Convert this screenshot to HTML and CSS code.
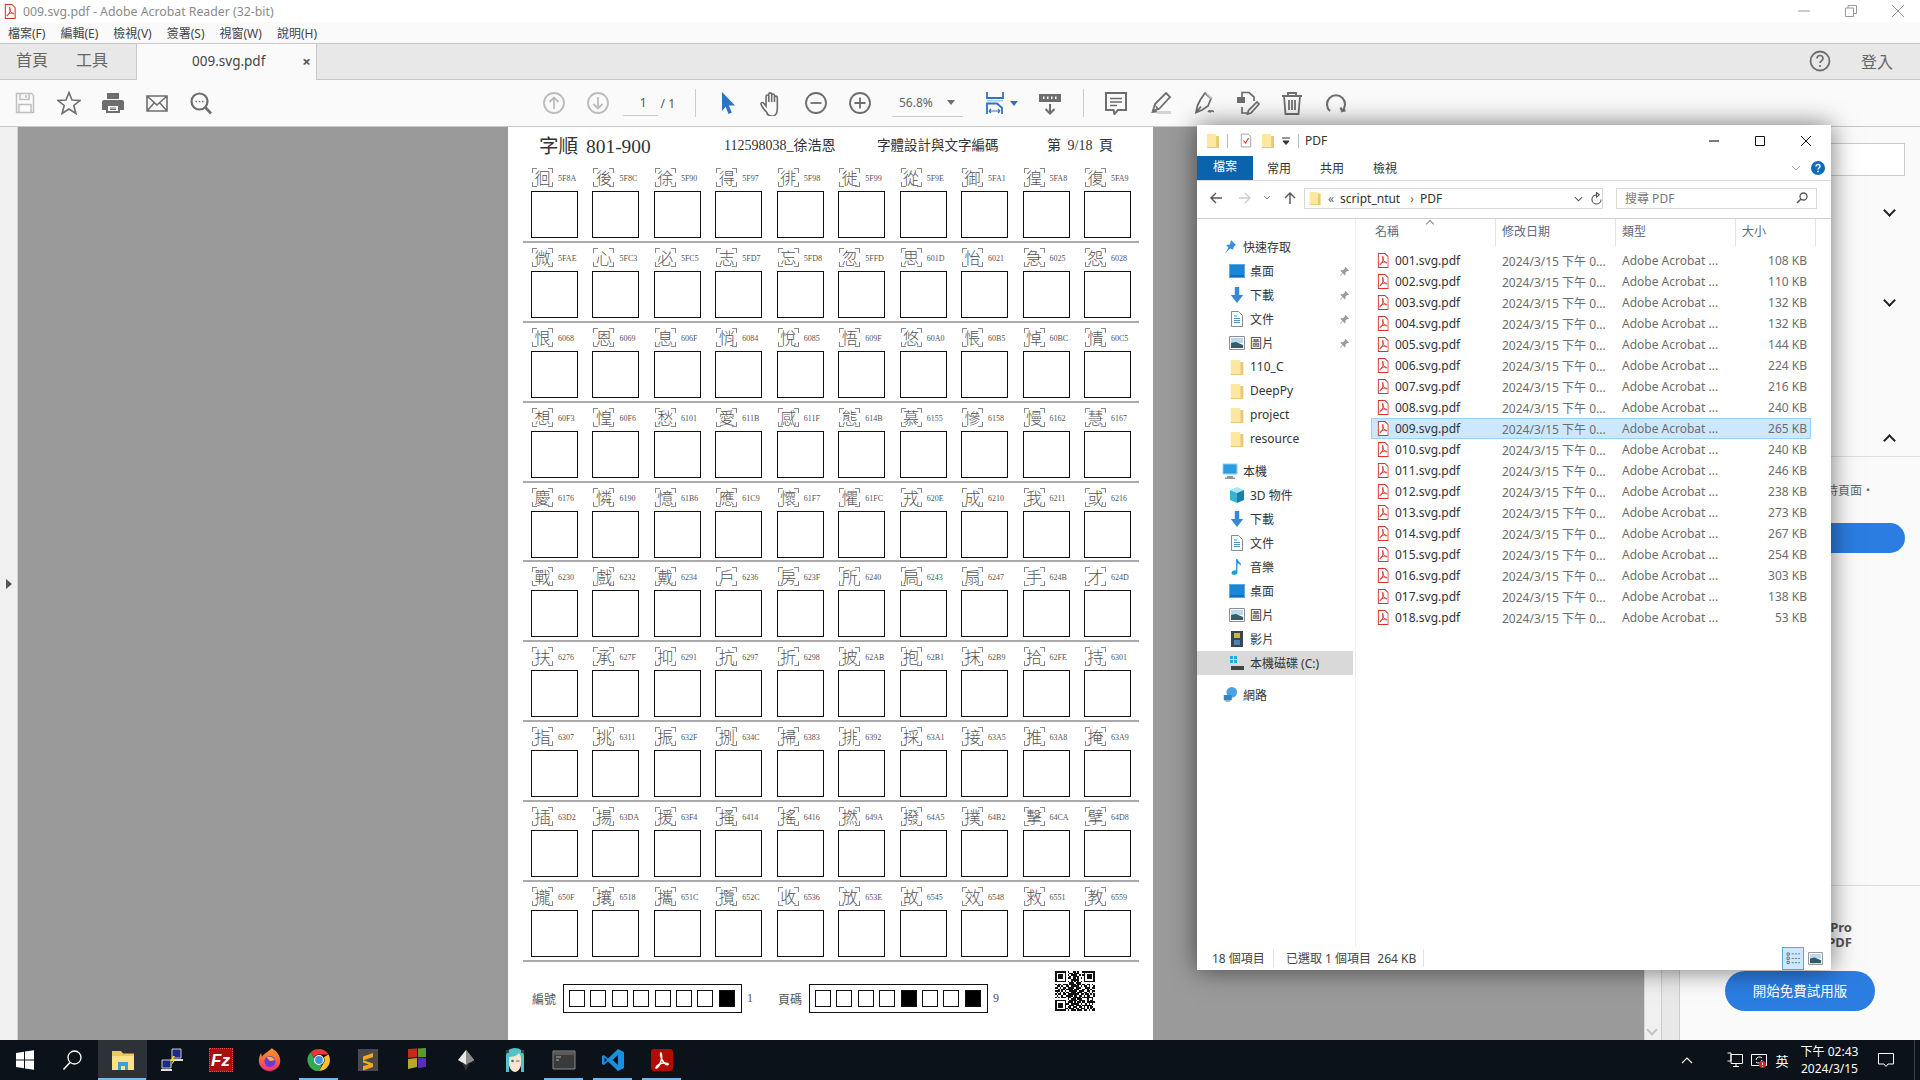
FILE: index.html

```html
<!DOCTYPE html>
<html lang="zh-Hant">
<head>
  <meta charset="UTF-8">
  <title>009.svg.pdf - Adobe Acrobat Reader (32-bit)</title>
  <link rel="stylesheet" href="styles.css">
</head>
<body>
  <svg class="defs" width="0" height="0">
    <symbol id="pdf" viewBox="0 0 12 16">
      <path d="M1 .5h7l3.500 3.500v11.500h-10.500z" fill="#fff" stroke="#d8342c" stroke-width="1.100"/>
      <path d="M6 3.500c-.8 0-.6 2 .6 4.500 1 1.800 2.600 3 3.400 2.600.6-.4-.6-1.300-2.800-1-2 .3-4.200 1.500-4.500 2.700-.2.800.9.300 1.800-1.200.9-1.500 1.900-4 1.500-6.400-.1-.5-.2-1.200-0-1.200z" fill="none" stroke="#d8342c" stroke-width="1"/>
    </symbol>
    <symbol id="folder" viewBox="0 0 13 16">
      <path d="M0 1h9l1 2h3v13H0z" fill="#fde8a0"/>
      <path d="M10 3h3v13H0v-1h10z" fill="#e9c873"/>
    </symbol>
    <symbol id="pin" viewBox="0 0 12 12">
      <path d="M7 1l4 4-1 .6-1-.3-2 2 .3 2L6.300 10 4.200 7.800 1.500 10.500 1 10l2.700-2.700L1.700 5.300l.7-1 2 .3 2-2-.3-1z" fill="#9a9a9a"/>
    </symbol>
    <symbol id="screen" viewBox="0 0 16 16">
      <path d="M0 1h16v14H0z" fill="#1a86d8"/>
      <path d="M0 12h16v3H0z" fill="#0f6cb8"/>
      <path d="M.5 1.500h15v13H.5z" fill="none" stroke="#5aa8e4"/>
    </symbol>
    <symbol id="down" viewBox="0 0 16 18">
      <path d="M5.500 0h5v9H15l-7 9-7-9h4.500z" fill="#3b86d6"/>
    </symbol>
    <symbol id="doc" viewBox="0 0 14 16">
      <path d="M1.500.5h7l4 4v11h-11z" fill="#fff" stroke="#7f8c99"/>
      <path d="M4 5h3M4 7.500h6M4 9.500h6M4 11.500h6" stroke="#4a90c8"/>
    </symbol>
    <symbol id="pic" viewBox="0 0 16 14">
      <path d="M.5.500h15v13H.5z" fill="#fff" stroke="#8a8f96"/>
      <path d="M2 2h12v5H2z" fill="#bcd8ee"/>
      <path d="M2 7l5-1 7 3v3H2z" fill="#2f5f62"/>
    </symbol>
  </svg>

  <div class="app">
    <div class="titlebar">
      <svg class="title-icon" viewBox="0 0 12 15"><use href="#pdf"/></svg>
      <span class="title-text">009.svg.pdf - Adobe Acrobat Reader (32-bit)</span>
      <div class="win-controls">
        <svg viewBox="0 0 12 12"><path d="M0 6h12" stroke="#999"/></svg>
        <svg viewBox="0 0 12 12"><path d="M.5 3h8v8.500h-8zM3 3V.5h8.500v8H8.500" fill="none" stroke="#999"/></svg>
        <svg viewBox="0 0 12 12"><path d="M0 0l12 12M12 0L0 12" stroke="#999"/></svg>
      </div>
    </div>

    <div class="menubar">
      <span>檔案(F)</span><span>編輯(E)</span><span>檢視(V)</span><span>簽署(S)</span><span>視窗(W)</span><span>說明(H)</span>
    </div>

    <div class="tabbar">
      <span class="nav-tab">首頁</span>
      <span class="nav-tab">工具</span>
      <div class="doc-tab">
        <span>009.svg.pdf</span>
        <span class="doc-close">×</span>
      </div>
      <div class="tab-right">
        <svg class="help" viewBox="0 0 22 22"><circle cx="11" cy="11" r="9.500" fill="none" stroke="#6e6e6e" stroke-width="1.800"/><path d="M8 8.500c0-4 6-4 6 0 0 2.200-3 2.300-3 4.500M11 15v2" fill="none" stroke="#6e6e6e" stroke-width="1.700"/></svg>
        <span class="signin">登入</span>
      </div>
    </div>

    <div class="toolbar">
      <div class="tb-btn first">
        <svg viewBox="0 0 24 24"><path d="M3.500 2.500h15l2 2v17h-17zM7 2.500v6h9v-6M6 21.500v-8h12v8M13 4v3" fill="none" stroke="#c0c0c0" stroke-width="1.500"/></svg>
      </div>
      <div class="tb-btn">
        <svg viewBox="0 0 24 24"><path d="M12 1.500l3 7.500 8 .5-6.200 5 2.100 8L12 18l-6.900 4.500 2.100-8-6.200-5 8-.5z" fill="none" stroke="#6e6e6e" stroke-width="1.600"/></svg>
      </div>
      <div class="tb-btn">
        <svg viewBox="0 0 24 24"><path d="M6 2h12v6H6zM3 9h18a2 2 0 0 1 2 2v8h-4v3H5v-3H1v-8a2 2 0 0 1 2-2z" fill="#6e6e6e"/><path d="M7 15h10v5H7z" fill="#fafafa"/><path d="M9 17h6M9 18.500h6" stroke="#6e6e6e"/></svg>
      </div>
      <div class="tb-btn">
        <svg viewBox="0 0 24 24"><path d="M2 5h20v15H2zM2 5l10 9 10-9M2 20l7.500-8.500M22 20l-7.500-8.500" fill="none" stroke="#6e6e6e" stroke-width="1.600"/></svg>
      </div>
      <div class="tb-btn">
        <svg viewBox="0 0 24 24"><circle cx="10.500" cy="10.500" r="8" fill="none" stroke="#6e6e6e" stroke-width="2.200"/><path d="M16 16l6 6.500" stroke="#6e6e6e" stroke-width="2.600"/><path d="M6.500 10.500h1.500M9.800 10.500h1.500M13 10.500h1.500" stroke="#6e6e6e" stroke-width="1.600"/></svg>
      </div>

      <div class="tb-btn nav-start">
        <svg viewBox="0 0 24 24"><circle cx="12" cy="12" r="10" fill="none" stroke="#bcbcbc" stroke-width="1.800"/><path d="M12 18V6.500M7.500 11L12 6.500l4.500 4.500" fill="none" stroke="#bcbcbc" stroke-width="1.800"/></svg>
      </div>
      <div class="tb-btn">
        <svg viewBox="0 0 24 24"><circle cx="12" cy="12" r="10" fill="none" stroke="#bcbcbc" stroke-width="1.800"/><path d="M12 6v11.500M7.500 13l4.500 4.500 4.500-4.500" fill="none" stroke="#bcbcbc" stroke-width="1.800"/></svg>
      </div>

      <div class="page-field">
        <span class="page-num">1</span>
        <span class="page-total">/ 1</span>
      </div>
      <div class="tb-sep sep-a"></div>

      <div class="tb-btn tools-start">
        <svg viewBox="0 0 24 24"><path d="M6 1l13 13.500h-6.200l3 7-3.300 1.500-2.900-7.200L6 20z" fill="#2d73c0"/></svg>
      </div>
      <div class="tb-btn">
        <svg class="hand" viewBox="0 0 24 24"><path d="M7.500 21c-2-2-4.500-5-5.500-7.500-.7-1.800 1.300-2.700 2.400-1.200L6.500 15V6c0-1.800 2.500-1.800 2.500 0v5-7c0-1.800 2.700-1.800 2.700 0v7-6c0-1.800 2.600-1.800 2.600 0v6-4c0-1.800 2.600-1.800 2.600 0v10c0 4-1 5.500-2.500 6.500-2.500 1-5 .5-6.900-1.500z" fill="none" stroke="#6e6e6e" stroke-width="1.500"/></svg>
      </div>
      <div class="tb-btn">
        <svg viewBox="0 0 24 24"><circle cx="12" cy="12" r="10" fill="none" stroke="#6e6e6e" stroke-width="1.800"/><path d="M6.500 12h11" stroke="#6e6e6e" stroke-width="1.800"/></svg>
      </div>
      <div class="tb-btn">
        <svg viewBox="0 0 24 24"><circle cx="12" cy="12" r="10" fill="none" stroke="#6e6e6e" stroke-width="1.800"/><path d="M6.500 12h11M12 6.500v11" stroke="#6e6e6e" stroke-width="1.800"/></svg>
      </div>

      <div class="zoom-combo">
        <span>56.8%</span>
        <i class="caret"></i>
      </div>

      <div class="tb-btn fit-btn">
        <svg viewBox="0 0 24 24"><path d="M4 1v6h16V1" fill="none" stroke="#2d73c0" stroke-width="1.800"/><path d="M4 9h16v1.500H4z" fill="#a9c8e8"/><path d="M4 23V12.500h10l5 4.500v6" fill="none" stroke="#2d73c0" stroke-width="1.800"/><path d="M6 20h11M6 20l2-2M6 20l2 2M17 20l-2-2M17 20l-2 2" stroke="#2d73c0" stroke-width="1.200" fill="none"/></svg>
        <i class="caret blue"></i>
      </div>
      <div class="tb-btn scroll-btn">
        <svg viewBox="0 0 24 24"><path d="M1 3h22v8H1z" fill="#6e6e6e"/><path d="M5 5.500h1.500v2.500H5zM9 5.500h1.500v2.500H9zM13 5.500h1.500v2.500H13zM17 5.500h1.500v2.500H17z" fill="#fff"/><path d="M12 13v9M7.500 18l4.500 4.500 4.500-4.500" fill="none" stroke="#6e6e6e" stroke-width="2"/></svg>
      </div>
      <div class="tb-sep sep-b"></div>

      <div class="tb-btn comment-start">
        <svg viewBox="0 0 24 24"><path d="M2 2h20v17h-8l-3.500 4-1-4H2z" fill="none" stroke="#6e6e6e" stroke-width="2"/><path d="M6 7.500h12M6 11h12M6 14.500h7" stroke="#6e6e6e" stroke-width="1.300"/></svg>
      </div>
      <div class="tb-btn">
        <svg viewBox="0 0 24 24"><path d="M18 2l4 4L11 18l-6 1.500L7 13z" fill="none" stroke="#6e6e6e" stroke-width="1.800"/><path d="M7 13l4 5-6 1.500-2 2.500 6-.5" fill="#6e6e6e"/><path d="M9 20h14v3H9z" fill="#d4d4d4"/></svg>
      </div>
      <div class="tb-btn">
        <svg viewBox="0 0 24 24"><path d="M13 2l6 5.500-3 7.500-6 4-6 2.500 1.500-7 3-6zM4 21.500l5-6" fill="none" stroke="#6e6e6e" stroke-width="1.800"/><path d="M13 2l3 1 5 4-2 1z" fill="#c8c8c8"/><path d="M16 21c1-1.500 2-2 2-.5s1-1 2-.8.800 1 2 .8" fill="none" stroke="#6e6e6e" stroke-width="1.500"/></svg>
      </div>
      <div class="tb-btn">
        <svg viewBox="0 0 24 24"><path d="M1 6h8v6H1z" fill="#6e6e6e"/><path d="M6 6V1.500h7l5 4.500v4M6 16v6h5" fill="none" stroke="#6e6e6e" stroke-width="1.700"/><path d="M21 11l2 2-8 9-3.500 1 1-3.500z" fill="none" stroke="#6e6e6e" stroke-width="1.700"/></svg>
      </div>
      <div class="tb-btn">
        <svg viewBox="0 0 24 24"><path d="M2 5h20M8 5V2h8v3M4 5l1.500 18h13L20 5M9 9v10M12 9v10M15 9v10" fill="none" stroke="#6e6e6e" stroke-width="1.800"/></svg>
      </div>
      <div class="tb-btn">
        <svg viewBox="0 0 24 24"><path d="M6 20a9 9 0 1 1 12 0l-1.500-3.500M18 20l3.500-.5" fill="none" stroke="#6e6e6e" stroke-width="2"/></svg>
      </div>
    </div>

    <div class="workspace">
      <div class="left-rail"><i class="rail-arrow"></i></div>

      <div class="viewer">
        <div class="page">
          <div class="sheet-head">
            <span class="head-title">字順 801-900</span>
            <span class="head-id">112598038_徐浩恩</span>
            <span class="head-course">字體設計與文字編碼</span>
            <span class="head-page">第 9/18 頁</span>
          </div>
          <div id="sheet"></div>
          <div class="sheet-foot">
            <span class="foot-label">編號</span>
            <div class="code-bar" data-on="7"></div>
            <span class="foot-num">1</span>
            <span class="foot-label second">頁碼</span>
            <div class="code-bar" data-on="4,7"></div>
            <span class="foot-num">9</span>
            <svg class="qr" id="qr" viewBox="0 0 25 25" shape-rendering="crispEdges"><path id="qrPath" fill="#111"/></svg>
          </div>
        </div>
      </div>

      <div class="scroll-track"><i class="scroll-down"></i></div>
      <div class="scroll-gutter"></div>

      <div class="side-panel">
        <div class="side-search"></div>
        <div class="side-row row-a"><i class="chev"></i></div>
        <div class="side-row row-b"><i class="chev"></i></div>
        <div class="side-row row-c"><i class="chev up"></i></div>
        <p class="side-note">持頁面・</p>
        <div class="side-action"></div>
        <div class="side-foot">
          <p class="promo">Pro<br>PDF</p>
          <div class="trial-btn">開始免費試用版</div>
        </div>
      </div>
    </div>

    <div class="taskbar">
      <div class="task-item">
        <svg viewBox="0 0 24 24"><path d="M3 5l8-1.200V11.500H3zM12 3.600L21 2.300v9.200H12zM3 12.500h8v7.700L3 19zM12 12.500h9v9.200l-9-1.300z" fill="#fff"/></svg>
      </div>
      <div class="task-item">
        <svg viewBox="0 0 24 24"><circle cx="12.500" cy="9.500" r="6.500" fill="none" stroke="#fff" stroke-width="1.300"/><path d="M8 14.500L1.500 21.500" stroke="#fff" stroke-width="1.500"/></svg>
      </div>
      <div class="task-item active running">
        <svg viewBox="0 0 24 24"><path d="M1 3h9l2 2.500h11V22H1z" fill="#f0c75e"/><path d="M1 8h22v14H1z" fill="#ffe08a"/><path d="M7 14h10v8h-3v-4h-4v4H7z" fill="#3aa0dc"/></svg>
      </div>
      <div class="task-item">
        <svg viewBox="0 0 24 24"><path d="M12 1h9v9h-9z" fill="#1c2a8c" stroke="#ccc"/><path d="M2 12h9v8H2z" fill="#1c2a8c" stroke="#ccc"/><path d="M1 21h11v2H1zM13 11h10v2H13z" fill="#ddd"/><path d="M13 8l-3 5h3l-3 6 6-8h-3l2-3z" fill="#ffd83a"/></svg>
      </div>
      <div class="task-item">
        <div class="fz-icon">Fz</div>
      </div>
      <div class="task-item">
        <svg viewBox="0 0 24 24"><defs><linearGradient id="fx" x1="0" y1="0" x2="0" y2="1"><stop offset="0" stop-color="#ff9a1a"/><stop offset="1" stop-color="#f5307a"/></linearGradient></defs><path d="M14 0c1 2 4 2 6 6 3 4 3 10 0 13-4 5-12 5-16 1C0 16 0 10 3 5l1 4c1-3 5-4 10-9z" fill="url(#fx)"/><circle cx="12" cy="13.500" r="5.500" fill="#6d3bd1"/><path d="M9 9c3-1 6 0 8 3l-4 1c-2 0-3-2-4-4z" fill="#ffb53a"/></svg>
      </div>
      <div class="task-item running">
        <svg viewBox="0 0 24 24"><path d="M12 1a11 11 0 0 1 9.500 5.500H12a5.500 5.500 0 0 0-5 3L3.800 4.200A11 11 0 0 1 12 1z" fill="#e53b30"/><path d="M21.500 6.500A11 11 0 0 1 12 23l4.800-8.200a5.500 5.500 0 0 0 0-5.600z" fill="#fbc02d"/><path d="M3.800 4.200L8.600 12.500a5.500 5.500 0 0 0 6.400 4L12 23A11 11 0 0 1 3.800 4.200z" fill="#34a853"/><circle cx="12" cy="12" r="4.500" fill="#4a90e2" stroke="#fff" stroke-width="1.200"/></svg>
      </div>
      <div class="task-item">
        <svg viewBox="0 0 24 24"><path d="M2 1h20v22H2z" fill="#4a4a4a"/><path d="M17 5l-10 3.500v4l10-3.500zM7 12l10 3.500v3.500l-10 3.500V18l6-1.500-6-2z" fill="#f5a623"/></svg>
      </div>
      <div class="task-item">
        <svg viewBox="0 0 24 24"><path d="M3 1l9-.5V9L3 10z" fill="#c42b1c"/><path d="M13 .5l8-.5v9l-8 .2z" fill="#5c9a2e"/><path d="M3 11l9-1v9l-9 2z" fill="#b8a82c"/><path d="M13 10h8v9l-8 1z" fill="#5a2bbf"/></svg>
      </div>
      <div class="task-item">
        <svg viewBox="0 0 24 24"><path d="M12 2l8 10-8 5-8-5z" fill="#e8e8e8"/><path d="M12 2l8 10-8 5z" fill="#8a8a8a"/><path d="M8 14l4 9 4-9-4 3z" fill="#333"/></svg>
      </div>
      <div class="task-item">
        <svg viewBox="0 0 24 24"><path d="M3 24V8c0-5 4-8 9-8s9 3 9 8v16h-3v-8H6v8z" fill="#4fc3c7"/><path d="M6 9c3 0 8-1 10-4 1 2 2 3 2 5v6c0 4-3 8-6 8s-6-4-6-8z" fill="#fde2cf"/><circle cx="9.500" cy="13" r="1.300" fill="#2a7f8a"/><path d="M13 13h3.500" stroke="#2a7f8a"/><path d="M3 2h3v3H3zM18 2h3v3h-3z" fill="#444"/></svg>
      </div>
      <div class="task-item running">
        <svg viewBox="0 0 24 24"><path d="M1 3h22v18H1z" fill="#3a3a3a" stroke="#8a8a8a"/><path d="M2 4h20v3H2z" fill="#5a5a5a"/><path d="M4 9h5M4 12h3" stroke="#aaa"/></svg>
      </div>
      <div class="task-item running">
        <svg viewBox="0 0 24 24"><path d="M17 1l6 3v16l-6 3L7 13.500 3 17l-2-1V8l2-1 4 3.500z" fill="#1a8fdb"/><path d="M17 7l-5.500 5 5.500 5zM3.500 9.500v5L6 12z" fill="#0b1118"/></svg>
      </div>
      <div class="task-item running">
        <svg viewBox="0 0 24 24"><rect x="1" y="1" width="22" height="22" rx="3" fill="#b30b00"/><path d="M11 5c-1 0-.5 4 1.500 7.500 1.700 2.800 4 4.500 5.500 4 1-.5-1-2-4.500-1.500S7 17.500 6 19.500c-.4 1 1.500.5 3-2S12 10 11.500 7c-.1-1-.1-2-.5-2z" fill="none" stroke="#fff" stroke-width="1.500"/></svg>
      </div>

      <div class="tray">
        <div class="tray-item"><svg viewBox="0 0 16 16"><path d="M3 11l5-5 5 5" fill="none" stroke="#fff" stroke-width="1.200"/></svg></div>
        <div class="tray-item net"><svg viewBox="0 0 16 16"><path d="M4 2.500h11.500v9H4zM9 11.500v3M6 14.500h6M.5 1h3.500v8H.5" fill="none" stroke="#fff"/></svg></div>
        <div class="tray-item">
          <svg viewBox="0 0 16 16"><path d="M.5 2.500h15v11H.5z" fill="none" stroke="#fff"/><path d="M5 8a3.500 3.500 0 0 1 6-2M11 8a3.500 3.500 0 0 1-6 2" fill="none" stroke="#fff"/><circle cx="11.500" cy="12.500" r="3.500" fill="#d81e2c"/><path d="M11.500 10.500v2.400M11.500 13.800v.8" stroke="#fff"/></svg>
        </div>
        <div class="tray-ime">英</div>
        <div class="clock"><span>下午 02:43</span><span>2024/3/15</span></div>
        <div class="notify"><svg viewBox="0 0 16 16"><path d="M.5 1.500h15v10.500H10l-2 2.500-2-2.500H.5z" fill="none" stroke="#fff"/></svg></div>
      </div>
    </div>

    <div class="explorer">
      <div class="ex-title">
        <svg class="ex-folder first" viewBox="0 0 13 16"><use href="#folder"/></svg>
        <i class="ex-tick"></i>
        <svg class="ex-check" viewBox="0 0 14 16"><path d="M1.500.5h8l3 3v12h-11z" fill="#fff" stroke="#999"/><path d="M4 8l2.500 3L10 5" fill="none" stroke="#d8342c" stroke-width="1.300"/></svg>
        <svg class="ex-folder" viewBox="0 0 13 16"><use href="#folder"/></svg>
        <svg class="ex-qat" viewBox="0 0 8 8"><path d="M0 1h8M1 4h6L4 7.500z" stroke="#333" fill="#333"/></svg>
        <i class="ex-tick"></i>
        <span class="ex-name">PDF</span>
        <div class="ex-controls">
          <svg viewBox="0 0 12 12"><path d="M1 6h10" stroke="#111" stroke-width="1.100"/></svg>
          <svg viewBox="0 0 12 12"><path d="M1.500 1.500h9v9h-9z" fill="none" stroke="#111"/></svg>
          <svg viewBox="0 0 12 12"><path d="M1 1l10 10M11 1L1 11" stroke="#111"/></svg>
        </div>
      </div>

      <div class="ex-tabs">
        <span class="ex-file-tab">檔案</span>
        <span>常用</span>
        <span>共用</span>
        <span>檢視</span>
        <svg class="ex-collapse" viewBox="0 0 10 6"><path d="M1 1l4 4 4-4" fill="none" stroke="#aaa"/></svg>
        <svg class="ex-help" viewBox="0 0 14 14"><circle cx="7" cy="7" r="7" fill="#0f6cbd"/><path d="M5 5.500c0-2.600 4-2.600 4 0 0 1.500-2 1.500-2 3M7 9.800v1.400" fill="none" stroke="#fff" stroke-width="1.400"/></svg>
      </div>

      <div class="ex-address">
        <svg class="ex-nav-btn" viewBox="0 0 14 14"><path d="M13 7H2M7 2L2 7l5 5" fill="none" stroke="#555" stroke-width="1.400"/></svg>
        <svg class="ex-nav-btn dim" viewBox="0 0 14 14"><path d="M1 7h11M7 2l5 5-5 5" fill="none" stroke="#ccc" stroke-width="1.400"/></svg>
        <svg class="ex-nav-drop" viewBox="0 0 8 6"><path d="M1 1l3 3 3-3" fill="none" stroke="#888"/></svg>
        <svg class="ex-nav-btn up" viewBox="0 0 14 14"><path d="M7 13V2M2 7l5-5 5 5" fill="none" stroke="#555" stroke-width="1.400"/></svg>
        <div class="path-box">
          <svg class="path-folder" viewBox="0 0 13 16"><use href="#folder"/></svg>
          <span class="path-crumb guil">«</span>
          <span class="path-crumb">script_ntut</span>
          <span class="path-crumb arrow">›</span>
          <span class="path-crumb">PDF</span>
          <svg class="path-drop" viewBox="0 0 10 6"><path d="M1 1l4 4 4-4" fill="none" stroke="#555" stroke-width="1.200"/></svg>
          <svg class="path-refresh" viewBox="0 0 12 14"><path d="M6 3a5 5 0 1 0 5 5M6 .5V5.500L9 3z" fill="none" stroke="#555" stroke-width="1.200"/></svg>
        </div>
        <div class="search-box">
          <span>搜尋 PDF</span>
          <svg viewBox="0 0 12 12"><circle cx="7.500" cy="4.500" r="3.500" fill="none" stroke="#555" stroke-width="1.300"/><path d="M5 7l-4 4" stroke="#555" stroke-width="1.600"/></svg>
        </div>
      </div>

      <div class="ex-body">
        <div class="ex-nav">
          <div class="nav-row top"><svg viewBox="0 0 16 16"><path d="M9 1l5 5-2 1.500-1 3-3-1-5 5 3.500-6L4 6l4-.5z" fill="#3a8ddb"/></svg>快速存取</div>
          <div class="nav-row"><svg viewBox="0 0 16 16"><use href="#screen"/></svg>桌面<svg class="nav-pin" viewBox="0 0 12 12"><use href="#pin"/></svg></div>
          <div class="nav-row"><svg viewBox="0 0 16 18"><use href="#down"/></svg>下載<svg class="nav-pin" viewBox="0 0 12 12"><use href="#pin"/></svg></div>
          <div class="nav-row"><svg viewBox="0 0 14 16"><use href="#doc"/></svg>文件<svg class="nav-pin" viewBox="0 0 12 12"><use href="#pin"/></svg></div>
          <div class="nav-row"><svg viewBox="0 0 16 14"><use href="#pic"/></svg>圖片<svg class="nav-pin" viewBox="0 0 12 12"><use href="#pin"/></svg></div>
          <div class="nav-row"><svg viewBox="0 0 13 16"><use href="#folder"/></svg>110_C</div>
          <div class="nav-row"><svg viewBox="0 0 13 16"><use href="#folder"/></svg>DeepPy</div>
          <div class="nav-row"><svg viewBox="0 0 13 16"><use href="#folder"/></svg>project</div>
          <div class="nav-row"><svg viewBox="0 0 13 16"><use href="#folder"/></svg>resource</div>
          <div class="nav-row top gap"><svg viewBox="0 0 16 16"><path d="M1 1h14v10H1z" fill="#2d9be0" stroke="#8ad0f5"/><path d="M5 13h6v1.500H5zM3 14.500h10V16H3z" fill="#8a98a5"/></svg>本機</div>
          <div class="nav-row"><svg viewBox="0 0 16 16"><path d="M8 0l7 3-7 3-7-3z" fill="#a6e8f2"/><path d="M1 3l7 3v10l-7-3z" fill="#37b4d3"/><path d="M15 3L8 6v10l7-3z" fill="#1a7fa8"/></svg>3D 物件</div>
          <div class="nav-row"><svg viewBox="0 0 16 18"><use href="#down"/></svg>下載</div>
          <div class="nav-row"><svg viewBox="0 0 14 16"><use href="#doc"/></svg>文件</div>
          <div class="nav-row"><svg viewBox="0 0 14 18"><path d="M6 0h1.500c.5 3 5 4 4 8-.5-2-2-3-4-3v10c0 2-2 3-4 3s-3-1.500-2.500-3S4 12 6 13z" fill="#1e9be0"/></svg>音樂</div>
          <div class="nav-row"><svg viewBox="0 0 16 16"><use href="#screen"/></svg>桌面</div>
          <div class="nav-row"><svg viewBox="0 0 16 14"><use href="#pic"/></svg>圖片</div>
          <div class="nav-row"><svg viewBox="0 0 14 16"><path d="M1 0h12v16H1z" fill="#3a4652"/><path d="M4 2h6v5H4z" fill="#d8b23a"/><path d="M4 9h6v5H4z" fill="#4a7fc0"/></svg>影片</div>
          <div class="nav-row selected"><svg viewBox="0 0 16 16"><path d="M1 1h3v3H1zM5 1h3v3H5zM1 5h3v3H1zM5 5h3v3H5z" fill="#23a9e1"/><path d="M2 11h13v4H2z" fill="#444"/></svg>本機磁碟 (C:)</div>
          <div class="nav-row top gap"><svg viewBox="0 0 16 18"><circle cx="10" cy="6" r="6" fill="#4aa3e0"/><path d="M1 9h9v6H1z" fill="#2f86c9"/><path d="M3 15h5v1.500H3z" fill="#8a98a5"/></svg>網路</div>
        </div>

        <div class="ex-files">
          <div class="file-head">
            <span class="col-name">名稱</span>
            <span>修改日期</span>
            <span>類型</span>
            <span class="col-size">大小</span>
            <i class="sort-mark"></i>
          </div>
          <div id="fileList"></div>
        </div>
      </div>

      <div class="ex-status">
        <span class="status-count">18 個項目</span>
        <span class="status-sel">已選取 1 個項目&nbsp;&nbsp;264 KB</span>
        <div class="view-btns">
          <div class="view-btn on"><svg viewBox="0 0 16 14"><path d="M1 1h2.500v2.500H1zM1 5.500h2.500V8H1zM1 10h2.500v2.500H1z" fill="none" stroke="#555" stroke-width=".8"/><path d="M6 2h9M6 7h9M6 11.500h9" stroke="#777" stroke-dasharray="2.500 1"/></svg></div>
          <div class="view-btn"><svg viewBox="0 0 16 14"><use href="#pic"/></svg></div>
        </div>
      </div>
    </div>
  </div>

  <script src="page.js"></script>
</body>
</html>
```

FILE: styles.css

```css
* {
  box-sizing: border-box;
}
body {
  margin: 0;
  font-family: "Noto Sans", "Noto Sans CJK TC", sans-serif;
  font-size: 12px;
  color: #333;
  overflow: hidden;
}
i {
  display: block;
  font-style: normal;
}
.defs {
  position: absolute;
}
.app {
  position: relative;
  width: 1920px;
  height: 1080px;
  display: flex;
  flex-direction: column;
  overflow: hidden;
  background: #fff;
}

/* acrobat chrome */
.titlebar {
  height: 22px;
  display: flex;
  align-items: center;
  padding-left: 4px;
  background: #fff;
}
.title-icon {
  width: 12px;
  height: 15px;
}
.title-text {
  margin-left: 7px;
  font-size: 12.300px;
  color: #8a8a8a;
}
.win-controls {
  margin-left: auto;
  display: flex;
  align-items: center;
  gap: 35px;
  padding-right: 16px;
}
.win-controls svg {
  width: 12px;
  height: 12px;
}
.menubar {
  height: 22px;
  display: flex;
  align-items: center;
  gap: 15px;
  padding-left: 8px;
  background: #fafafa;
  border-bottom: 1px solid #c8c8c8;
  font-size: 12px;
  color: #444;
}
.tabbar {
  height: 36px;
  display: flex;
  background: #e8e8e8;
  border-bottom: 1px solid #c8c8c8;
}
.nav-tab {
  margin-left: 16px;
  margin-right: 12px;
  line-height: 32px;
  font-size: 16px;
  color: #666;
}
.doc-tab {
  width: 181px;
  height: 36px;
  margin-left: 16px;
  padding: 0 0 2px 55px;
  display: flex;
  align-items: center;
  background: #fafafa;
  border-left: 1px solid #c8c8c8;
  border-right: 1px solid #c8c8c8;
  font-size: 13.500px;
  color: #444;
}
.doc-close {
  margin-left: 37px;
  font-size: 15px;
  font-weight: bold;
  color: #555;
}
.tab-right {
  margin-left: auto;
  display: flex;
  align-items: center;
  padding: 0 27px 2px 0;
}
.help {
  width: 22px;
  height: 22px;
}
.signin {
  margin-left: 30px;
  font-size: 16px;
  color: #666;
}
.toolbar {
  height: 47px;
  display: flex;
  align-items: center;
  background: #fafafa;
  border-bottom: 1px solid #c8c8c8;
}
.tb-btn {
  width: 44px;
  display: flex;
  justify-content: center;
  align-items: center;
  flex: none;
}
.tb-btn svg {
  width: 24px;
  height: 24px;
}
.tb-btn svg.hand {
  width: 26px;
  height: 26px;
}
.first {
  margin-left: 3px;
}
.nav-start {
  margin-left: 309px;
}
.page-field {
  width: 52px;
  margin-left: 3px;
  display: flex;
  height: 28px;
  font-size: 12px;
  color: #555;
  align-items: center;
}
.page-num {
  width: 35px;
  padding-left: 6px;
  line-height: 24px;
  text-align: center;
  border-bottom: 1px solid #ccc;
}
.page-total {
  margin-left: 3px;
  white-space: nowrap;
}
.tb-sep {
  width: 1px;
  height: 28px;
  background: #ccc;
}
.sep-a {
  margin-left: 20px;
}
.sep-b {
  margin-left: 11px;
}
.tools-start {
  margin-left: 10px;
}
.zoom-combo {
  width: 71px;
  margin-left: 10px;
  height: 28px;
  padding-left: 7px;
  display: flex;
  align-items: center;
  border-bottom: 1px solid #ccc;
  color: #666;
  font-size: 12px;
}
.caret {
  width: 0;
  height: 0;
  margin-left: 14px;
  border-left: 4px solid transparent;
  border-right: 4px solid transparent;
  border-top: 5px solid #6e6e6e;
}
.caret.blue {
  margin-left: 3px;
  border-top-color: #2d73c0;
}
.fit-btn {
  width: 40px;
  margin-left: 17px;
}
.scroll-btn {
  margin-left: 8px;
}
.comment-start {
  margin-left: 10px;
}

/* document area */
.workspace {
  flex: 1;
  display: flex;
  min-height: 0;
}
.left-rail {
  width: 18px;
  display: flex;
  align-items: center;
  justify-content: center;
  background: #f0f0f0;
  border-right: 1px solid #d4d4d4;
}
.rail-arrow {
  width: 0;
  height: 0;
  margin-top: 0;
  border-top: 5px solid transparent;
  border-bottom: 5px solid transparent;
  border-left: 6px solid #555;
}
.viewer {
  width: 1626px;
  background: #9a9a9a;
}
.page {
  width: 645px;
  height: 100%;
  margin-left: 490px;
  padding-left: 15px;
  background: #fff;
  display: flex;
  flex-direction: column;
  font-family: "Liberation Serif", "Noto Sans CJK TC", serif;
}
.sheet-head {
  height: 36px;
  display: flex;
  align-items: center;
  color: #333;
  white-space: nowrap;
  padding-bottom: 2px;
}
.head-title {
  margin-left: 16px;
  width: 185px;
  font-size: 19.500px;
  word-spacing: 3px;
}
.head-id {
  width: 153px;
  font-size: 14px;
}
.head-course {
  width: 170px;
  font-size: 13.500px;
}
.head-page {
  font-size: 14px;
  word-spacing: 3px;
}
.sheet-row {
  width: 616px;
  height: 79.900px;
  padding: 5px 0 0 8px;
  display: grid;
  grid-template-columns: repeat(10, 47px);
  column-gap: 14.450px;
  border-bottom: 2px solid #aaa;
}
.cell-label {
  height: 19px;
  margin-left: 1px;
  display: flex;
  white-space: nowrap;
}
.glyph {
  width: 21px;
  height: 19px;
  text-align: center;
  font-family: "Noto Sans CJK TC", sans-serif;
  font-size: 16px;
  font-weight: 300;
  line-height: 19px;
  color: #555;
  background:
    linear-gradient(#888, #888) 0 0 / 5px 1px no-repeat,
    linear-gradient(#888, #888) 0 0 / 1px 5px no-repeat,
    linear-gradient(#888, #888) 100% 0 / 5px 1px no-repeat,
    linear-gradient(#888, #888) 100% 0 / 1px 5px no-repeat,
    linear-gradient(#888, #888) 0 100% / 5px 1px no-repeat,
    linear-gradient(#888, #888) 0 100% / 1px 5px no-repeat,
    linear-gradient(#888, #888) 100% 100% / 5px 1px no-repeat,
    linear-gradient(#888, #888) 100% 100% / 1px 5px no-repeat;
}
.code {
  margin-left: 5px;
  font-size: 8px;
  line-height: 22px;
  color: #555;
}
.cell-box {
  width: 47px;
  height: 47px;
  margin-top: 4px;
  border: 1.500px solid #111;
}
.sheet-foot {
  flex: 1;
  display: flex;
  align-items: flex-start;
  position: relative;
  padding: 22px 0 0 9px;
}
.foot-label {
  width: 24px;
  line-height: 29px;
  font-family: "Noto Sans CJK TC", sans-serif;
  font-size: 12px;
  color: #555;
  white-space: nowrap;
}
.foot-label.second {
  margin-left: 25px;
}
.code-bar {
  width: 179px;
  height: 29px;
  margin-left: 7px;
  padding-left: 5px;
  display: flex;
  align-items: center;
  gap: 5.400px;
  border: 1.500px solid #111;
}
.code-bar i {
  width: 16px;
  height: 17px;
  border: 1px solid #111;
}
.code-bar i.on {
  background: #000;
}
.foot-num {
  margin-left: 5px;
  line-height: 29px;
  font-size: 12px;
  color: #555;
}
.qr {
  position: absolute;
  left: 532px;
  top: 9px;
  width: 40px;
  height: 40px;
}
.scroll-track {
  width: 17px;
  position: relative;
  background: #f0f0f0;
  border-left: 1px solid #d8d8d8;
}
.scroll-down {
  position: absolute;
  left: 3px;
  bottom: 6px;
  width: 8px;
  height: 8px;
  border-right: 2px solid #c4c4c4;
  border-bottom: 2px solid #c4c4c4;
  transform: rotate(45deg);
}
.scroll-gutter {
  width: 19px;
  background: #e8e8e8;
  border-left: 1px solid #ccc;
  border-right: 1px solid #ccc;
}
.side-panel {
  flex: 1;
  display: flex;
  flex-direction: column;
  background: #fafafa;
}
.side-search {
  height: 33px;
  margin: 16px 15px 0 16px;
  background: #fff;
  border: 1px solid #ccc;
}
.side-row {
  display: flex;
  justify-content: flex-end;
  padding-right: 26px;
}
.row-a {
  height: 72px;
  padding-top: 30px;
}
.row-b {
  height: 89px;
  padding-top: 48px;
}
.row-c {
  height: 120px;
  padding-top: 95px;
  border-bottom: 1px solid #ddd;
}
.chev {
  width: 9px;
  height: 9px;
  border-right: 2px solid #222;
  border-bottom: 2px solid #222;
  transform: rotate(45deg);
}
.chev.up {
  transform: rotate(225deg);
  margin-top: 4px;
}
.side-note {
  margin: 25px 0 0 146px;
  line-height: 18px;
  font-size: 12px;
  color: #666;
}
.side-action {
  width: 230px;
  height: 30px;
  margin-top: 23px;
  margin-left: -5px;
  border-radius: 15px;
  background: #2b7de1;
}
.side-foot {
  margin-top: auto;
  height: 155px;
  padding: 34px 0 0 45px;
  border-top: 1px solid #ddd;
  position: relative;
}
.promo {
  width: 25px;
  margin: 0 0 0 102px;
  line-height: 15px;
  font-size: 13px;
  font-weight: bold;
  text-align: right;
  color: #555;
}
.trial-btn {
  width: 150px;
  height: 40px;
  margin-top: 21px;
  line-height: 40px;
  text-align: center;
  border-radius: 20px;
  background: #2b7de1;
  color: #fff;
  font-size: 13.500px;
}

/* taskbar */
.taskbar {
  height: 40px;
  display: flex;
  background: #0b1219;
}
.task-item {
  width: 49px;
  height: 40px;
  display: flex;
  align-items: center;
  justify-content: center;
  position: relative;
  flex: none;
}
.task-item svg {
  width: 24px;
  height: 24px;
}
.task-item.active {
  background: #2c3238;
}
.task-item.running::after {
  content: "";
  position: absolute;
  left: 5px;
  right: 5px;
  bottom: 0;
  height: 2px;
  background: #76b9ed;
}
.task-item.active::after {
  left: 0;
  right: 1px;
}
.fz-icon {
  width: 24px;
  height: 24px;
  line-height: 24px;
  text-align: center;
  background: #a80f0f;
  border: 1px dotted #e04a4a;
  color: #fff;
  font-family: "Liberation Sans", sans-serif;
  font-size: 17px;
  font-weight: bold;
  font-style: italic;
}
.tray {
  margin-left: auto;
  display: flex;
  align-items: center;
  padding-right: 5px;
  color: #fff;
}
.tray-item {
  width: 24px;
  display: flex;
  justify-content: center;
}
.tray-item svg {
  width: 16px;
  height: 16px;
}
.tray-item.net {
  margin-left: 24px;
}
.tray-ime {
  width: 22px;
  text-align: center;
  font-size: 13px;
}
.clock {
  width: 73px;
  display: flex;
  flex-direction: column;
  align-items: center;
  line-height: 17px;
  font-size: 12px;
}
.notify {
  width: 40px;
  margin-right: 8px;
  display: flex;
  justify-content: center;
}
.notify svg {
  width: 16px;
  height: 16px;
}
.tray::after {
  content: "";
  width: 1px;
  height: 40px;
  background: #3b4046;
}

/* explorer window, floats over the reader */
.explorer {
  position: absolute;
  left: 1197px;
  top: 125px;
  width: 634px;
  height: 845px;
  display: flex;
  flex-direction: column;
  background: #fff;
  box-shadow: 0 0 24px rgba(0, 0, 0, 0.55);
}
.ex-title {
  height: 31px;
  display: flex;
  align-items: center;
  flex: none;
}
.ex-folder {
  width: 12px;
  height: 15px;
  margin-left: 10px;
}
.ex-folder.first {
  margin-left: 10px;
}
.ex-tick {
  width: 1px;
  height: 14px;
  margin-left: 8px;
  background: #bbb;
}
.ex-check {
  width: 12px;
  height: 15px;
  margin-left: 12px;
}
.ex-qat {
  width: 8px;
  height: 8px;
  margin-left: 8px;
}
.ex-name {
  margin-left: 6px;
}
.ex-controls {
  margin-left: auto;
  display: flex;
  gap: 34px;
  padding-right: 19px;
}
.ex-controls svg {
  width: 12px;
  height: 12px;
}
.ex-tabs {
  height: 25px;
  flex: none;
  display: flex;
  align-items: center;
  border-bottom: 1px solid #dadada;
  color: #333;
  padding-bottom: 1px;
}
.ex-tabs span {
  margin-right: 29px;
}
.ex-tabs .ex-file-tab {
  width: 56px;
  height: 24px;
  margin: 0 14px -1px 0;
  line-height: 22px;
  text-align: center;
  background: #0a64ad;
  color: #fff;
}
.ex-collapse {
  width: 10px;
  height: 6px;
  margin-left: auto;
}
.ex-help {
  width: 14px;
  height: 14px;
  margin: 0 6px 0 10px;
}
.ex-address {
  height: 38px;
  flex: none;
  display: flex;
  align-items: center;
  padding-bottom: 3px;
  border-bottom: 1px solid #d0d0d0;
}
.ex-nav-btn {
  width: 14px;
  height: 14px;
  margin-left: 12px;
}
.ex-nav-btn.dim {
  margin-left: 15px;
}
.ex-nav-drop {
  width: 8px;
  height: 6px;
  margin-left: 11px;
}
.ex-nav-btn.up {
  margin-left: 12px;
}
.path-box {
  width: 299px;
  height: 21px;
  margin-left: 7px;
  display: flex;
  align-items: center;
  border: 1px solid #d9d9d9;
  position: relative;
}
.path-folder {
  width: 12px;
  height: 14px;
  margin-left: 4px;
}
.path-crumb {
  margin-left: 6px;
  color: #333;
}
.path-crumb.guil {
  margin-left: 7px;
  color: #666;
}
.path-crumb.arrow {
  margin-left: 10px;
  color: #666;
}
.path-drop {
  width: 9px;
  height: 6px;
  position: absolute;
  left: 269px;
  top: 7px;
}
.path-refresh {
  width: 11px;
  height: 13px;
  position: absolute;
  left: 286px;
  top: 3px;
}
.search-box {
  width: 201px;
  height: 21px;
  margin-left: 13px;
  padding: 0 8px;
  display: flex;
  align-items: center;
  justify-content: space-between;
  border: 1px solid #d9d9d9;
  color: #777;
}
.search-box svg {
  width: 12px;
  height: 12px;
}
.ex-body {
  flex: 1;
  display: flex;
  min-height: 0;
}
.ex-nav {
  width: 159px;
  padding-top: 16px;
  border-right: 1px solid #eee;
  color: #333;
}
.nav-row {
  height: 24px;
  width: 156px;
  display: flex;
  align-items: center;
  padding: 0 0 1px 53px;
  position: relative;
  white-space: nowrap;
}
.nav-row > svg:first-child {
  position: absolute;
  left: 32px;
  top: 4px;
  width: 16px;
  height: 16px;
}
.nav-row.top {
  padding-left: 46px;
}
.nav-row.top > svg:first-child {
  left: 25px;
}
.nav-row.gap {
  margin-top: 8px;
}
.nav-row.selected {
  background: #d9d9d9;
}
.nav-row > .nav-pin {
  position: absolute;
  left: 142px;
  top: 7px;
  width: 11px;
  height: 11px;
}
.ex-files {
  flex: 1;
}
.file-head {
  height: 27px;
  display: grid;
  grid-template-columns: 140px 120px 120px 80px;
  position: relative;
  color: #5a6b80;
}
.file-head span {
  padding-left: 6px;
  line-height: 25px;
  border-right: 1px solid #e4e4e4;
}
.file-head .col-name {
  padding-left: 19px;
}
.sort-mark {
  position: absolute;
  left: 71px;
  top: 2px;
  width: 6px;
  height: 6px;
  border-left: 1px solid #888;
  border-top: 1px solid #888;
  transform: rotate(45deg);
}
#fileList {
  margin: 4px 0 0 15px;
  width: 440px;
}
.file-row {
  height: 21px;
  display: grid;
  grid-template-columns: 23px 107px 120px 120px 1fr;
  align-items: center;
  border: 1px solid transparent;
  white-space: nowrap;
  color: #6d6d6d;
}
.file-row svg {
  width: 12px;
  height: 15px;
  margin-left: 5px;
}
.file-row .file-name {
  color: #333;
}
.file-row.selected {
  background: #cce8ff;
  border-color: #99d1ff;
}
.file-size {
  padding-right: 3px;
  text-align: right;
}
.ex-status {
  height: 23px;
  flex: none;
  display: flex;
  align-items: center;
  position: relative;
  color: #444;
}
.status-count {
  margin: 0 0 2px 15px;
  width: 62px;
  border-right: 1px solid #e4e4e4;
}
.status-sel {
  margin-bottom: 2px;
  padding-left: 12px;
  width: 150px;
  border-right: 1px solid #e4e4e4;
  white-space: nowrap;
}
.view-btns {
  margin-left: auto;
  display: flex;
  align-items: center;
  padding-right: 5px;
}
.view-btn {
  width: 22px;
  height: 23px;
  display: flex;
  align-items: center;
  justify-content: center;
}
.view-btn.on {
  background: #cce8ff;
  border: 1px solid #5ba8d0;
}
.view-btn svg {
  width: 15px;
  height: 13px;
}
```

FILE: page.js

```js
const rows = [
  "徊後徐得徘徙從御徨復",
  "微心必志忘忽思怡急怨",
  "恨恩息悄悅悟悠悵悼情",
  "想惶愁愛感態慕慘慢慧",
  "慶憐憶應懷懼戎成我或",
  "戰戲戴戶房所扃扇手才",
  "扶承抑抗折披抱抹拾持",
  "指挑振捌掃排採接推掩",
  "插揚援搔搖撚撥撲擊擘",
  "攏攘攜攬收放故效救教"
];

const sheet = document.getElementById("sheet");
rows.forEach(row => {
  const div = document.createElement("div");
  div.className = "sheet-row";
  let html = "";
  for (const ch of row) {
    const code = ch.codePointAt(0).toString(16).toUpperCase();
    html += `<div class="cell"><div class="cell-label"><span class="glyph">${ch}</span><span class="code">${code}</span></div><div class="cell-box"></div></div>`;
  }
  div.innerHTML = html;
  sheet.appendChild(div);
});

// number boxes at the foot of the sheet
document.querySelectorAll(".code-bar").forEach(bar => {
  const on = bar.dataset.on.split(",").map(Number);
  for (let i = 0; i < 8; i++) {
    const box = document.createElement("i");
    if (on.includes(i)) box.className = "on";
    bar.appendChild(box);
  }
});

const qrRows = [
  "1111111010011010011111111",
  "1000001001101110001000001",
  "1011101010111101011011101",
  "1011101001011110001011101",
  "1011101011011010101011101",
  "1000001000111110001000001",
  "1111111010101010101111111",
  "0000000001110111000000000",
  "1011011101111011011011010",
  "0110100110111110101101001",
  "1101011011110111000111011",
  "0010110111101110011010100",
  "1110101001111101110011011",
  "0101010110111011101101010",
  "1011011011111110110110101",
  "0100100111101101101011001",
  "1010111011011111011111110",
  "0000000010111011100010010",
  "1111111001111101111010110",
  "1000001011101011011011111",
  "1011101110111110100101010",
  "1011101001110111011111100",
  "1011101011011101101010110",
  "1000001101110110111010101",
  "1111111010111011101101011"
];
let qrPath = "";
qrRows.forEach((line, y) => {
  [...line].forEach((bit, x) => {
    if (bit === "1") qrPath += `M${x} ${y}h1v1h-1z`;
  });
});
document.getElementById("qrPath").setAttribute("d", qrPath);

const sizes = [108, 110, 132, 132, 144, 224, 216, 240, 265, 240, 246, 238, 273, 267, 254, 303, 138, 53];
const fileList = document.getElementById("fileList");
sizes.forEach((size, i) => {
  const name = String(i + 1).padStart(3, "0") + ".svg.pdf";
  const div = document.createElement("div");
  div.className = i === 8 ? "file-row selected" : "file-row";
  div.innerHTML = `<svg viewBox="0 0 12 16"><use href="#pdf"/></svg><span class="file-name">${name}</span><span>2024/3/15 下午 0...</span><span>Adobe Acrobat ...</span><span class="file-size">${size} KB</span>`;
  fileList.appendChild(div);
});
```
